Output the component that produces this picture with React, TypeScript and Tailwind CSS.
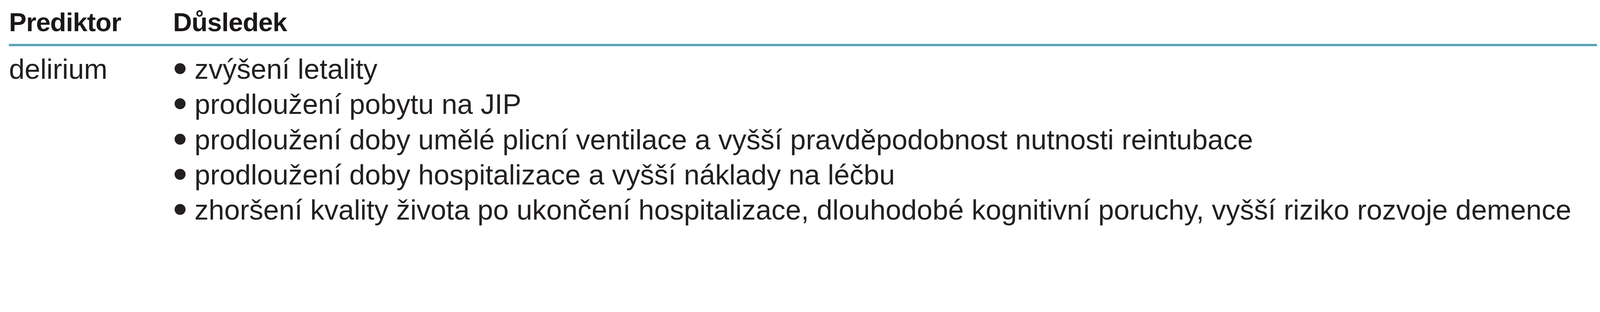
const items = [
  'zvýšení letality',
  'prodloužení pobytu na JIP',
  'prodloužení doby umělé plicní ventilace a vyšší pravděpodobnost nutnosti reintubace',
  'prodloužení doby hospitalizace a vyšší náklady na léčbu',
  'zhoršení kvality života po ukončení hospitalizace, dlouhodobé kognitivní poruchy, vyšší riziko rozvoje demence',
];

export default function App() {
  return (
    <div className="h-[625px] w-full overflow-hidden bg-white pl-[23px] pr-[8px] pt-[12px] text-[#231f20] font-['Liberation_Sans',Arial,sans-serif] leading-[90.2px]">
      {/* Header */}
      <div className="grid grid-cols-[420px_1fr] text-[67px] font-bold tracking-[-0.8px] text-[#1b1718]">
        <div>Prediktor</div>
        <div>Důsledek</div>
      </div>
      <div className="mt-[11px] h-[5px] bg-[#5a99ae] shadow-[0_0_2px_2px_#d3f5fa]" />

      {/* Body */}
      <div className="mt-[14px] grid grid-cols-[420px_1fr] text-[72px]">
        <div>delirium</div>
        <ul>
          {items.map((t, i) => (
            <li key={i} className="flex">
              <span className="mt-[30px] ml-[4px] mr-[23px] h-[28px] w-[28px] shrink-0 self-start rounded-full bg-[#231f20]" />
              <span className="whitespace-nowrap">{t}</span>
            </li>
          ))}
        </ul>
      </div>
    </div>
  );
}
